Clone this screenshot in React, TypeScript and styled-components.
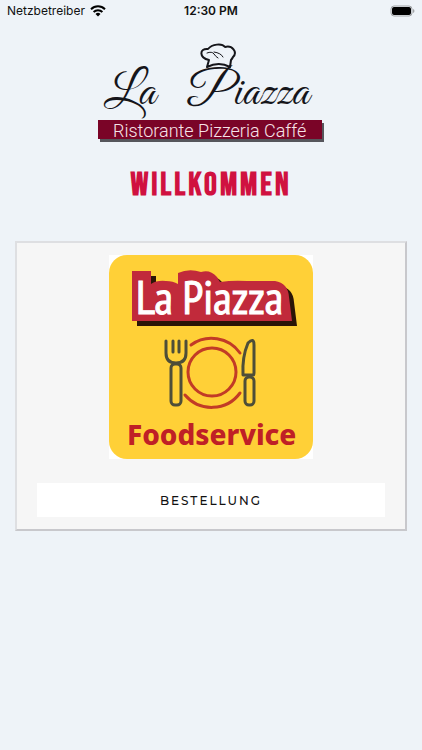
import React from "react";
import styled, { createGlobalStyle } from "styled-components";

const GlobalStyle = createGlobalStyle`
  *, *::before, *::after { box-sizing: border-box; }
  body { margin: 0; background: #eef3f8; color: #111; font-family: Inter, sans-serif; }
`;

const Screen = styled.div`
  min-height: 100vh;
  background: #eef3f8;
`;

const StatusBar = styled.header`
  display: grid;
  grid-template-columns: 1fr auto 1fr;
  align-items: center;
  height: 22px;
  padding: 0 7px;
  font-size: 12px;
  line-height: 16px;
`;

const Carrier = styled.div`
  display: flex;
  align-items: center;
  gap: 5px;
`;

const Clock = styled.time`
  font-weight: 600;
`;

const BatteryIcon = styled.svg`
  justify-self: end;
`;

const Main = styled.main`
  display: flex;
  flex-direction: column;
  align-items: center;
  padding: 20px 15px;
`;

const Brand = styled.svg`
  display: block;
  width: 232px;
  height: 104px;
`;

const ScriptText = styled.text`
  font-family: "Great Vibes", "Pinyon Script", "Liberation Serif", serif;
  font-size: 48px;
  fill: #15151a;
`;

const Tagline = styled.text`
  font-family: Roboto, sans-serif;
  font-weight: 300;
  font-size: 18px;
  fill: #f7e3e8;
`;

const Title = styled.h1`
  margin: 21px 0 36px;
  color: #d01140;
  font-family: "Bebas Neue", Roboto, sans-serif;
  font-size: 32px;
  font-weight: 700;
  letter-spacing: 3px;
  line-height: 38px;
`;

const Card = styled.section`
  display: flex;
  flex-direction: column;
  align-items: center;
  gap: 24px;
  width: 100%;
  padding: 12px 20px;
  background: #f6f6f6;
  border: 2px solid;
  border-color: #dedfe2 #c8c8cc #c8c8cc #dedfe2;
`;

const Badge = styled.svg`
  display: block;
  width: 204px;
  height: 204px;
  background: #fff;
`;

const BadgeName = styled.text`
  font-family: "PT Sans Narrow", "Fira Sans Condensed", "Open Sans", sans-serif;
  font-size: 46px;
  font-weight: 400;
  fill: #fff;
  stroke: #fff;
  stroke-width: 1px;
`;

const BadgeService = styled.text`
  font-family: "Noto Sans", sans-serif;
  font-weight: 800;
  font-size: 28px;
  fill: #bf2026;
`;

const OrderButton = styled.button`
  width: 100%;
  height: 34px;
  padding: 0;
  border: 0;
  background: #fff;
  color: #111;
  font-family: Montserrat, Inter, sans-serif;
  font-size: 12px;
  font-weight: 500;
  letter-spacing: 2px;
  cursor: pointer;
`;

const BANNER =
  "M23 16H42V29Q48 25 57 26Q64 26 69 29V18Q80 13 92 17Q101 14 108 22L111 27Q124 25 138 26H166Q179 28 180 42L183 66H23Z";

function WifiIcon() {
  return (
    <svg width="16" height="12" viewBox="0 0 16 12" fill="none" stroke="#000" strokeWidth="2" aria-label="WLAN">
      <path d="M1 4.2a10 10 0 0 1 14 0M3.6 7a6.3 6.3 0 0 1 8.800 0" />
      <path d="M5.500 9a3.600 3.600 0 0 1 5 0L8 11.600z" fill="#000" stroke="none" />
    </svg>
  );
}

function Battery() {
  return (
    <BatteryIcon width="25" height="12" viewBox="0 0 25 12" aria-label="Batterie">
      <rect x="1" y="1" width="21" height="10" rx="3" fill="none" stroke="#a2a5a8" />
      <rect x="2" y="2" width="19" height="8" rx="2" fill="#000" />
      <path d="M23 4v4q1.500-.5 1.500-2T23 4z" fill="#a2a5a8" />
    </BatteryIcon>
  );
}

function BrandLogo() {
  return (
    <Brand viewBox="0 0 232 104">
      <g fill="none" stroke="#15151a" strokeWidth="2" strokeLinecap="round" strokeLinejoin="round">
        <path d="M112 25L114 18C104 16 104 6 113 7C117 2 127 1 130 5C137 3 143 10 138 15Q137 17 136 18L135 25Q124 19 112 25Z" />
        <path strokeWidth="1" d="M112 11Q117 9 119 12T123 16M119 10Q126 11 128 15" />
      </g>
      <ScriptText x="9" y="62">La</ScriptText>
      <ScriptText x="92" y="62">Piazza</ScriptText>
      <rect x="5" y="81" width="224" height="19" fill="#56565c" />
      <rect x="3" y="78" width="224" height="19" fill="#7a0427" />
      <Tagline x="18" y="95">Ristorante Pizzeria Caffé</Tagline>
    </Brand>
  );
}

function FoodserviceBadge() {
  return (
    <Badge viewBox="0 0 204 204">
      <rect width="204" height="204" rx="18" fill="#ffd037" />
      <path d={BANNER} transform="translate(5 5)" fill="#2b1506" />
      <path d={BANNER} fill="#c12a3b" />
      <BadgeName x="27" y="59">La Piazza</BadgeName>
      <g fill="none" stroke="#4e4e38" strokeWidth="3" strokeLinecap="round" strokeLinejoin="round">
        <path d="M57 86V98Q57 108 67 108Q77 108 77 98V86M64 86V97M70 86V97" />
        <rect x="62" y="109" width="10" height="41" rx="4" />
        <path d="M144 120H134Q133 102 139 88Q145 82 145 90V118Q145 120 144 120Z" />
        <rect x="136" y="122" width="9" height="28" rx="4" />
      </g>
      <g fill="none" stroke="#c23b26" strokeWidth="3" strokeLinecap="round">
        <circle cx="103" cy="117" r="24" />
        <path d="M82 90A35 35 0 0 1 131 98M76 140A35 35 0 0 0 131 138" />
      </g>
      <BadgeService x="18" y="190">Foodservice</BadgeService>
    </Badge>
  );
}

export default function App() {
  return (
    <Screen>
      <GlobalStyle />
      <StatusBar>
        <Carrier>
          <span>Netzbetreiber</span>
          <WifiIcon />
        </Carrier>
        <Clock>12:30 PM</Clock>
        <Battery />
      </StatusBar>
      <Main>
        <BrandLogo />
        <Title>WILLKOMMEN</Title>
        <Card>
          <FoodserviceBadge />
          <OrderButton type="button">BESTELLUNG</OrderButton>
        </Card>
      </Main>
    </Screen>
  );
}
